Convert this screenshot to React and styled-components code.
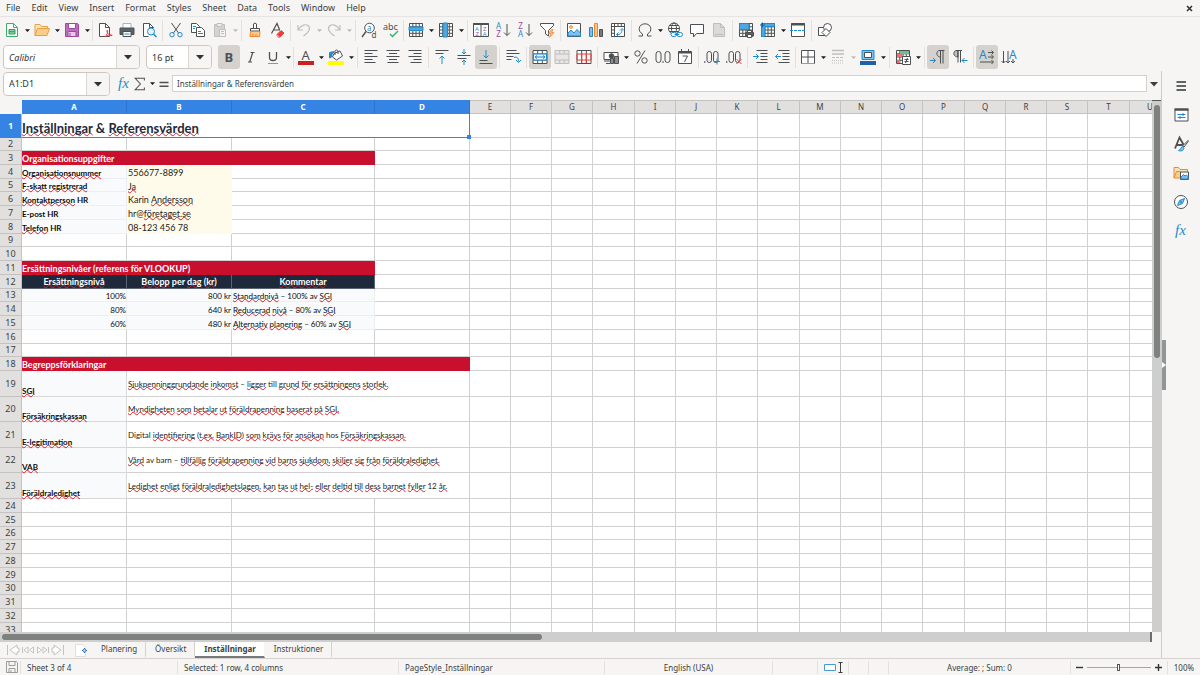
import { Fragment } from 'react';
import styled, { createGlobalStyle } from 'styled-components';

const GlobalStyle = createGlobalStyle`
  * {
    box-sizing: border-box;
  }

  body {
    margin: 0;
    background-color: #f6f5f4;
  }

  button, input {
    font-family: inherit;
    color: inherit;
    border-radius: 0;
    margin: 0;
    padding: 0;
  }
`;

const Window = styled.div`
  display: flex;
  flex-direction: column;
  height: 100vh;
  overflow: hidden;
  background-color: #f6f5f4;
  color: #3a3f41;
  font-family: 'Noto Sans', 'Open Sans', sans-serif;
  font-size: 9px;
`;

const MenuBar = styled.nav`
  display: flex;
  align-items: center;
  height: 17px;
  padding-right: 6px;
  border-bottom: 1px solid #e6e4e2;
`;

const MenuItem = styled.button`
  border: none;
  background: none;
  font-size: 9px;
  line-height: 16px;
  padding: 0 5px 0 6px;
`;

const CloseButton = styled.button`
  display: flex;
  margin-left: auto;
  border: none;
  background: none;
`;

const Toolbar = styled.div`
  display: flex;
  align-items: center;
  height: 27px;
  padding: 0 0 1px ${props => props.$inset ? '3px' : '1px'};
`;

const ToolButton = styled.button`
  display: flex;
  align-items: center;
  justify-content: center;
  flex-shrink: 0;
  width: 22px;
  height: 24px;
  border: none;
  border-radius: 3px;
  background-color: ${props => props.$active ? '#d5d1cd' : 'transparent'};
`;

const ArrowButton = styled.button`
  display: flex;
  align-items: center;
  justify-content: center;
  flex-shrink: 0;
  width: 8px;
  height: 24px;
  border: none;
  background: none;
  color: ${props => props.disabled ? '#bdbbb9' : '#1b1b1b'};
`;

const Separator = styled.span`
  flex-shrink: 0;
  width: 1px;
  height: 21px;
  margin: ${props => props.$tight ? '0 1px' : '0 2px'};
  background-color: #e3e1df;
`;

const Combo = styled.div`
  display: flex;
  flex-shrink: 0;
  width: ${props => props.$width};
  height: 24px;
  margin-right: 6px;
  border: 1px solid #cdc7c2;
  border-radius: 4px;
  background-color: #fff;
  overflow: hidden;
`;

const ComboInput = styled.input`
  flex: 1;
  min-width: 0;
  border: none;
  outline: none;
  background: none;
  padding-left: 5px;
  font-size: 9px;
  font-style: ${props => props.$italic ? 'italic' : 'normal'};
  color: #2e3436;
`;

const ComboArrow = styled.button`
  display: flex;
  align-items: center;
  justify-content: center;
  width: 23px;
  border: none;
  border-left: 1px solid #dad6d2;
  background-color: #f6f5f4;
  color: #2e3436;
`;

const Workspace = styled.div`
  display: flex;
  flex: 1;
  min-height: 0;
`;

const Document = styled.main`
  display: flex;
  flex-direction: column;
  flex: 1;
  min-width: 0;
  border-right: 1px solid #cfcdca;
`;

const FormulaBar = styled.div`
  display: flex;
  align-items: center;
  height: 29px;
  padding: 0 0 4px 3px;
`;

const FormulaButton = styled.button`
  display: flex;
  align-items: center;
  justify-content: center;
  width: 16px;
  height: 24px;
  border: none;
  background: none;
`;

const FormulaInput = styled.input`
  flex: 1;
  min-width: 0;
  height: 17px;
  border: 1px solid #d5d0cc;
  outline: none;
  background-color: #fff;
  padding-left: 4px;
  font-size: 8px;
`;

const ExpandButton = styled(FormulaButton)`
  width: 14px;
`;

const GridRow = styled.div`
  display: flex;
  flex: 1;
  min-height: 0;
`;

const GridPane = styled.div`
  flex: 1;
  min-width: 0;
  overflow: hidden;
  background-color: #fff;
`;

const Sheet = styled.table`
  table-layout: fixed;
  width: 1px;
  border-collapse: separate;
  border-spacing: 0;
`;

const HeaderCell = styled.th`
  height: 14px;
  padding: 0;
  border-top: 1px solid ${props => props.$selected ? '#3584e4' : '#c4c3c2'};
  border-right: 1px solid ${props => props.$selected ? '#2c74cc' : '#c4c3c2'};
  border-bottom: 1px solid ${props => props.$selected ? '#3584e4' : '#c4c3c2'};
  background-color: ${props => props.$selected ? '#3584e4' : '#e1e0df'};
  color: ${props => props.$selected ? '#fff' : '#3a3f41'};
  font-size: 8px;
  font-weight: ${props => props.$selected ? '700' : '400'};
  line-height: 12px;
`;

const CornerCell = styled.th`
  padding: 0;
  background-color: #f6f5f4;
`;

const RowHeader = styled.th`
  padding: 0;
  border-right: 1px solid #c4c3c2;
  border-bottom: 1px solid ${props => props.$selected ? '#3584e4' : '#c4c3c2'};
  background-color: ${props => props.$selected ? '#3584e4' : '#e1e0df'};
  color: ${props => props.$selected ? '#fff' : '#3a3f41'};
  font-size: 9px;
  font-weight: ${props => props.$selected ? '700' : '400'};
  line-height: 12px;
`;

const FILLS = {
  none: { background: '#fff', line: '#d0d0d0', color: '#1c1c1c' },
  heading: { background: '#c8102e', line: '#c8102e', color: '#fff' },
  columns: { background: '#1e293b', line: '#5b6472', color: '#fff' },
  label: { background: '#f8fafc', line: '#eceff1', color: '#0b0b0b' },
  term: { background: '#f8fafc', line: '#d6d8da', color: '#0b0b0b' },
  value: { background: '#fffbeb', line: '#fffbeb', color: '#222' },
  plain: { background: '#fff', line: '#d0d0d0', color: '#1c1c1c' },
  title: { background: '#fff', line: '#3584e4', color: '#1e293b' },
};

const TEXT_SIZES = { small: '8px', large: '9px', title: '13px' };

const Cell = styled.td`
  height: ${props => props.$height}px;
  padding: 0;
  position: ${props => props.$anchor ? 'relative' : 'static'};
  border-right: 1px solid ${props => FILLS[props.$fill].line};
  border-bottom: 1px solid ${props => FILLS[props.$fill].line};
  background-color: ${props => FILLS[props.$fill].background};
  color: ${props => FILLS[props.$fill].color};
  vertical-align: ${props => props.$valign || 'bottom'};
  text-align: ${props => props.$align || 'left'};
`;

const CellText = styled.div`
  height: ${props => props.$size === 'title' ? '18px' : '12px'};
  padding-left: ${props => props.$bold ? '0' : '1px'};
  font-family: Lato, 'Open Sans', sans-serif;
  font-size: ${props => TEXT_SIZES[props.$size || 'small']};
  font-weight: ${props => props.$bold ? '700' : '400'};
  line-height: ${props => props.$size === 'title' ? '19px' : props.$low ? '15px' : '13px'};
  white-space: nowrap;
`;

const Misspelt = styled.span`
  text-decoration: underline wavy #e01b24 1px;
  text-decoration-skip-ink: none;
  text-underline-offset: -1px;
`;

const FillHandle = styled.span`
  position: absolute;
  right: -2px;
  bottom: -2px;
  width: 4px;
  height: 4px;
  background-color: #3584e4;
  z-index: 1;
`;

const VerticalScrollbar = styled.div`
  display: flex;
  flex-direction: column;
  align-items: center;
  width: 9px;
  padding-top: 4px;
  border-top: 1px solid #55585a;
  background-color: #cecece;
`;

const HorizontalScrollbar = styled.div`
  display: flex;
  align-items: center;
  height: 10px;
  margin-right: 9px;
  padding-left: 2px;
  border-right: 2px solid #6d6f70;
  background-color: #cecece;
`;

const ScrollThumb = styled.div`
  border-radius: 3px;
  background-color: #7f8180;
  width: ${props => props.$vertical ? '6px' : '47%'};
  height: ${props => props.$vertical ? '48%' : '6px'};
`;

const TabBar = styled.div`
  display: flex;
  align-items: center;
  height: 16px;
  padding-left: 5px;
`;

const TabNav = styled.button`
  display: flex;
  align-items: center;
  justify-content: center;
  width: 15px;
  height: 14px;
  border: none;
  background: none;
`;

const AddSheet = styled.button`
  display: flex;
  width: 12px;
  height: 14px;
  margin: 0 5px 0 10px;
  border: none;
  background: none;
`;

const SheetTab = styled.button`
  height: 16px;
  padding: 0 8px 0 9px;
  border: none;
  border-right: 1px solid ${props => props.$active ? 'transparent' : '#d5d2cf'};
  border-bottom: 2px solid ${props => props.$active ? '#77797a' : 'transparent'};
  background-color: ${props => props.$active ? '#fff' : 'transparent'};
  background-clip: padding-box;
  font-size: 8px;
  font-weight: ${props => props.$active ? '700' : '400'};
  line-height: 14px;
`;

const SideBar = styled.aside`
  display: flex;
  width: 38px;
`;

const SideHandle = styled.button`
  display: flex;
  align-items: center;
  justify-content: center;
  align-self: center;
  width: 4px;
  height: 50px;
  border: none;
  background-color: #929595;
`;

const SideDeck = styled.div`
  display: flex;
  flex-direction: column;
  flex: 1;
`;

const SideButton = styled.button`
  display: flex;
  align-items: center;
  justify-content: center;
  height: 29px;
  padding-right: 4px;
  border: none;
  background: none;
`;

const StatusBar = styled.footer`
  display: grid;
  grid-template-columns: 21px 157px 221px 206px 168px 45px 31px 20px 20px 1fr 97px 32px;
  align-items: center;
  height: 17px;
  border-top: 1px solid #d5d2cf;
  font-size: 8px;
`;

const StatusItem = styled.div`
  display: flex;
  align-items: center;
  justify-content: ${props => props.$center ? 'center' : 'flex-start'};
  height: 13px;
  padding-left: ${props => props.$center ? '0' : '6px'};
  border-right: ${props => props.$last ? 'none' : '1px solid #e3e1df'};
  white-space: nowrap;
`;

const ZoomControl = styled.div`
  display: flex;
  align-items: center;
  justify-content: center;
  gap: 4px;
  height: 13px;
  border-right: 1px solid #e3e1df;
`;

const ZoomButton = styled.button`
  display: flex;
  border: none;
  background: none;
`;

const ZoomSlider = styled.input`
  appearance: none;
  width: 64px;
  height: 8px;
  background: linear-gradient(#a3a5a6, #a3a5a6) center / 100% 1px no-repeat;

  &::-webkit-slider-thumb {
    appearance: none;
    width: 3px;
    height: 7px;
    border: 1px solid #55585a;
    background-color: #fff;
  }
`;

const Drawing = styled.svg`
  flex-shrink: 0;
  overflow: visible;
`;

const DARK = '#4d5052';
const BLUE = '#1e8bcd';
const LIGHT = '#83beec';
const GREY = '#c0bebc';
const ORANGE = '#ed8733';
const RED = '#ed3d3b';
const PURPLE = '#a0479f';

const Svg = ({ size = 16, children }) => (
  <Drawing width={size} height={size} viewBox="0 0 16 16" fill="none" stroke={DARK} strokeWidth="1" aria-hidden="true">
    {children}
  </Drawing>
);

const Triangle = ({ size = 6 }) => (
  <svg width={size} height={size} viewBox="0 0 8 8" aria-hidden="true">
    <path d="M0 2h8L4 6.500z" fill="currentColor" />
  </svg>
);

const Letter = ({ x, y, size, color = DARK, family = 'Noto Sans', weight = 400, slant, children }) => (
  <text
    x={x}
    y={y}
    fill={color}
    stroke="none"
    fontSize={size}
    fontFamily={`'${family}', sans-serif`}
    fontWeight={weight}
    fontStyle={slant ? 'italic' : 'normal'}
  >
    {children}
  </text>
);

const gridPath = 'M1.500 1.500h13v13h-13zM1.500 4.800h13M1.500 8h13M1.500 11.300h13M4.800 1.500v13M8 1.500v13M11.300 1.500v13';

const icons = {
  new: (
    <Svg>
      <path d="M2.500 1.500h7l4 4v9h-11z" fill="#fff" stroke="#3fae6c" />
      <path d="M9.500 1.500v4h4" stroke="#3fae6c" />
      <path d="M5 7.500h6v4.500H5z" fill="#8fd0a9" stroke="#2e9e5b" />
      <path d="M5 9.700h6" stroke="#2e9e5b" />
    </Svg>
  ),
  open: (
    <Svg>
      <path d="M1 13.500V2.500h5l1.500 2h6v2" fill="#fbe3b8" stroke="#e5a04a" />
      <path d="M1 13.500l2.500-7h12l-2.500 7z" fill="#f9cf87" stroke="#e5a04a" />
    </Svg>
  ),
  save: (
    <Svg>
      <path d="M1.500 1.500h12l1 1v12h-13z" fill="#bb70bd" stroke={PURPLE} />
      <path d="M4.500 1.500h7v5h-7z" fill="#fff" stroke={PURPLE} />
      <path d="M4 9.500h8v5H4z" fill="#e8cbe9" stroke={PURPLE} />
      <path d="M6 11v3" stroke={PURPLE} />
    </Svg>
  ),
  pdf: (
    <Svg>
      <path d="M2.500 1.500h6l4 4v9h-10z" fill="#fff" />
      <path d="M8.500 1.500v4h4" />
      <path d="M8 15c2-2 3-5 2.600-6.500-.6-1-1.200.5 0 2.500s3 3 4.300 2.500-2-1.500-6 .8" stroke={RED} />
    </Svg>
  ),
  print: (
    <Svg>
      <path d="M4 6V1.500h8V6" fill="#fff" stroke={LIGHT} />
      <path d="M1 6h14v6.500H1z" fill="#5c6266" stroke={DARK} />
      <path d="M4 9.500h8v5H4z" fill="#fff" />
      <path d="M5.500 12h5" stroke={BLUE} />
    </Svg>
  ),
  preview: (
    <Svg>
      <path d="M12.500 6V5.500l-4-4h-6v13h5" fill="#fff" />
      <path d="M8.500 1.500v4h4" />
      <circle cx="10" cy="9.500" r="3.500" fill="#e3f2fc" stroke={BLUE} />
      <path d="M12.500 12l3 3" stroke={BLUE} strokeWidth="1.500" />
    </Svg>
  ),
  cut: (
    <Svg>
      <path d="M3.500 1l7 10M12.500 1l-7 10" />
      <circle cx="4" cy="12.700" r="2.200" stroke={BLUE} />
      <circle cx="12" cy="12.700" r="2.200" stroke={BLUE} />
    </Svg>
  ),
  copy: (
    <Svg>
      <path d="M1.500 1.500h5l3 3v6h-8z" fill="#fff" />
      <path d="M6.500 5.500h5l3 3v6h-8z" fill="#fff" />
      <path d="M3 4.500h3M3 6.500h2M8 9.500h3M8 11.500h5" stroke={BLUE} />
    </Svg>
  ),
  paste: (
    <Svg>
      <path d="M2.500 2.500h10v12h-10z" fill="#d5d3d1" stroke={GREY} />
      <path d="M5 1.500h5v3H5z" fill="#eee" stroke={GREY} />
      <path d="M7.500 7.500h6v7h-6z" fill="#f6f5f4" stroke={GREY} />
      <path d="M9 9.500h3M9 11.500h3" stroke={GREY} />
    </Svg>
  ),
  clone: (
    <Svg>
      <path d="M6.500 6.500V2c0-1 3-1 3 0v4.500" fill="#fff" />
      <path d="M3.500 6.500h9V9h-9z" fill="#fff" />
      <path d="M3.500 9.500h9.500l-.5 5H3z" fill="#fbc88b" stroke={ORANGE} />
      <path d="M6 12v2.500M9 12v2.500" stroke={ORANGE} />
    </Svg>
  ),
  clear: (
    <Svg>
      <path d="M2.500 11.500L8 1.500l2.500 6M4.500 8H11" strokeWidth="1.200" />
      <path d="M8 12.500l4-4 3 2.500-4 4-2 .2z" fill={RED} stroke={RED} />
      <path d="M7.500 13l2.500 2" stroke="#f7a6a5" strokeWidth="1.500" />
    </Svg>
  ),
  undo: (
    <Svg>
      <path d="M2 3v5h5M2.500 7.500C5 3 10 1.500 12.500 4S13 10 7.500 14" stroke={GREY} strokeWidth="1.200" />
    </Svg>
  ),
  redo: (
    <Svg>
      <path d="M14 3v5H9M13.500 7.500C11 3 6 1.500 3.500 4S3 10 8.500 14" stroke={GREY} strokeWidth="1.200" />
    </Svg>
  ),
  find: (
    <Svg>
      <circle cx="8.500" cy="6" r="4.800" fill="#fff" />
      <path d="M5 9.500L1 15" strokeWidth="1.400" />
      <Letter x="6" y="8.500" size="8" color={BLUE}>a</Letter>
      <Letter x="10.500" y="15.500" size="8">d</Letter>
    </Svg>
  ),
  spelling: (
    <Svg>
      <Letter x="0" y="7.500" size="9">abc</Letter>
      <path d="M7 12l2.500 2.500L15 9" stroke="#2eb56b" strokeWidth="1.400" />
    </Svg>
  ),
  row: (
    <Svg>
      <path d={gridPath} fill="#fff" />
      <path d="M1 5h14v3.500H1z" fill="#4ea8e0" stroke={BLUE} />
    </Svg>
  ),
  column: (
    <Svg>
      <path d={gridPath} fill="#fff" />
      <path d="M5 1h4.500v14H5z" fill="#4ea8e0" stroke={BLUE} />
    </Svg>
  ),
  sort: (
    <Svg>
      <path d="M.5 1.500h15v13H.5zM8 1.500v13" fill="#fff" />
      <path d="M.5 2h15" strokeWidth="2" />
      <Letter x="2" y="8.500" size="6" color={BLUE}>A</Letter>
      <Letter x="2.500" y="14" size="6" color={PURPLE}>Z</Letter>
      <Letter x="10" y="8.500" size="6" color={PURPLE}>Z</Letter>
      <Letter x="9.800" y="14" size="6" color={BLUE}>A</Letter>
    </Svg>
  ),
  ascending: (
    <Svg>
      <Letter x="1" y="7" size="8" color={BLUE}>A</Letter>
      <Letter x="1.200" y="15" size="8" color={PURPLE}>Z</Letter>
      <path d="M12 2v11.500M9 10.500l3 3 3-3" />
    </Svg>
  ),
  descending: (
    <Svg>
      <Letter x="1.200" y="7" size="8" color={PURPLE}>Z</Letter>
      <Letter x="1" y="15" size="8" color={BLUE}>A</Letter>
      <path d="M12 2v11.500M9 10.500l3 3 3-3" />
    </Svg>
  ),
  filter: (
    <Svg>
      <path d="M1.500 1.500h13v2l-5 5v5.500L6.500 12V8.500l-5-5z" fill="#fff" />
      <path d="M12.500 7.500l-3 4H12l-1.500 4 4.500-5h-2.500l1.500-3z" fill="#fbc88b" stroke={ORANGE} strokeWidth=".8" />
    </Svg>
  ),
  image: (
    <Svg>
      <path d="M1.500 1.500h13v13h-13z" fill="#fff" />
      <path d="M2 14v-3l3-3 3 3 3-3.500 3.500 3.500V14z" fill={LIGHT} stroke={BLUE} />
      <circle cx="5" cy="5" r="1.400" fill="#fbc88b" stroke={ORANGE} strokeWidth=".8" />
    </Svg>
  ),
  chart: (
    <Svg>
      <path d="M1.500 5.500h3v9h-3z" fill={LIGHT} stroke={BLUE} />
      <path d="M6.500 1.500h3v13h-3z" fill="#fbc88b" stroke={ORANGE} />
      <path d="M11.500 7.500h3v7h-3z" fill="#77797b" />
    </Svg>
  ),
  pivot: (
    <Svg>
      <path d="M1.500 1.500h13v13h-13zM1.500 4.500h13M4.500 1.500v13M8 1.500v3M11.300 1.500v3M1.500 8h3M1.500 11.300h3" fill="#fff" />
      <path d="M7 12.500c3 .5 5-1.500 5-5M10 8.500l2-2 2 2M8.500 10.500l-2 2 2 2" stroke={BLUE} />
    </Svg>
  ),
  omega: (
    <Svg>
      <path d="M1.500 14h4v-2C3 10.500 2 8.500 2.200 6.500 2.500 3.500 5 1.800 8 1.800s5.500 1.700 5.800 4.700c.2 2-.8 4-3.300 5.500v2h4" />
    </Svg>
  ),
  link: (
    <Svg>
      <circle cx="7" cy="6.500" r="5.500" fill="#fff" />
      <ellipse cx="7" cy="6.500" rx="2.500" ry="5.500" />
      <path d="M1.500 6.500h11M2.500 3.500h9M2.500 9.500h9" />
      <rect x="4" y="10.500" width="5.500" height="4" rx="2" fill="#fff" stroke={BLUE} />
      <rect x="10" y="10.500" width="5.500" height="4" rx="2" fill="#fff" stroke={BLUE} />
      <path d="M7.500 12.500h5" stroke={BLUE} />
    </Svg>
  ),
  comment: (
    <Svg>
      <path d="M1.500 2.500h13v9h-7l-3 3.500v-3.500h-3z" fill="#fff" />
    </Svg>
  ),
  headerFooter: (
    <Svg>
      <path d="M2.500 1.500h7l4 4v9h-11z" fill="#dcdad8" stroke={GREY} />
      <path d="M9.500 1.500v4h4M4 12.500h8" stroke={GREY} />
    </Svg>
  ),
  printArea: (
    <Svg>
      <path d={gridPath} fill="#fff" />
      <path d="M1.500 1.500h9.500v6h-9.500z" fill="#4ea8e0" stroke={BLUE} />
      <path d="M7.500 10.500h8V14h-8z" fill="#5c6266" />
      <path d="M9.500 8.500h4v2h-4zM9.500 12.500h4v3h-4z" fill="#fff" />
    </Svg>
  ),
  freeze: (
    <Svg>
      <path d={gridPath} fill="#fff" />
      <path d="M1.500 1.500h13v3h-9.500v10h-3.500z" fill="#4ea8e0" stroke={BLUE} />
      <path d="M0 3h5M2.500.5v5" stroke="#155f99" />
    </Svg>
  ),
  split: (
    <Svg>
      <path d="M1.500 1.500h13v13h-13z" fill="#fff" />
      <path d="M1 2.500h14" strokeWidth="2" />
      <path d="M0 8.500h16" stroke={BLUE} strokeDasharray="3 1" />
    </Svg>
  ),
  shapes: (
    <Svg>
      <path d="M1.500 5.500h8v8h-8z" fill="#fff" />
      <circle cx="10.500" cy="5.500" r="4" fill="#fff" />
      <path d="M9 6.500l4 4-4 4-4-4z" fill="#fff" />
    </Svg>
  ),
  bold: <Svg><Letter x="3.500" y="13" size="13" weight={700}>B</Letter></Svg>,
  italic: <Svg><path d="M7.500 3.500h4M5 13h4M9.700 3.500L6.700 13" strokeWidth="1.200" /></Svg>,
  underline: (
    <Svg>
      <path d="M4.500 3v5.500c0 4 7 4 7 0V3" strokeWidth="1.300" />
      <path d="M3 14.500h10" stroke="#4ea8e0" />
    </Svg>
  ),
  fontColor: (
    <Svg>
      <Letter x="3.500" y="10.500" size="13">A</Letter>
      <path d="M0 14h16" stroke="#c9211e" strokeWidth="4" />
    </Svg>
  ),
  highlight: (
    <Svg>
      <path d="M6 4.500l6-2.500 2.500 5-6 4-4-3z" fill="#fff" />
      <path d="M7 6V2.500c0-2 3-2 3 0V5" />
      <path d="M1.500 9V3.500L6 2.500 4 5.500 3.500 8z" fill={BLUE} stroke={BLUE} />
      <path d="M0 14h16" stroke="#ffff00" strokeWidth="4" />
    </Svg>
  ),
  alignLeft: <Svg><path d="M1.500 1.500h13M1.500 4.500h8M1.500 7.500h13M1.500 10.500h8M1.500 13.500h11" /></Svg>,
  alignCenter: <Svg><path d="M1.500 1.500h13M4 4.500h8M1.500 7.500h13M4 10.500h8M2.500 13.500h11" /></Svg>,
  alignRight: <Svg><path d="M1.500 1.500h13M6.500 4.500h8M1.500 7.500h13M6.500 10.500h8M3.500 13.500h11" /></Svg>,
  alignTop: (
    <Svg>
      <path d="M1.500 1.500h13M1.500 4.500h8" />
      <path d="M8 15V7M5.500 9.500L8 7l2.500 2.500" stroke={BLUE} />
    </Svg>
  ),
  alignMiddle: (
    <Svg>
      <path d="M1.500 6.500h13M1.500 9.500h9" />
      <path d="M8 0v5M6 3l2 2 2-2M8 16v-5M6 13l2-2 2 2" stroke={BLUE} />
    </Svg>
  ),
  alignBottom: (
    <Svg>
      <path d="M1.500 11.500h8M1.500 14.500h13" />
      <path d="M8 1v8M5.500 6.500L8 9l2.500-2.500" stroke={BLUE} />
    </Svg>
  ),
  wrap: (
    <Svg>
      <path d="M1.500 1.500h10M1.500 4.500h13M1.500 7.500h7M1.500 10.500h5" />
      <path d="M9 8.500c3-1 4.500 0 4.500 4M11 11l2.500 2.500L16 11" stroke={BLUE} />
    </Svg>
  ),
  merge: (
    <Svg>
      <path d="M1 1.500h14v13H1zM1 5h14M1 11h14M5.700 1.500V5M10.300 1.500V5M5.700 11v3.500M10.300 11v3.500" fill="#fff" />
      <path d="M1.500 5h13v6h-13z" fill="#e3f2fc" stroke={BLUE} />
      <path d="M3 8h10M5 6.500L3 8l2 1.500M11 6.500L13 8l-2 1.500" stroke={BLUE} />
    </Svg>
  ),
  mergeCells: (
    <Svg>
      <path d="M1 1.500h14v13H1zM1 5h14M1 11h14M5.700 1.500V5M10.300 1.500V5M5.700 11v3.500M10.300 11v3.500" fill="#e8e6e4" stroke={GREY} />
    </Svg>
  ),
  splitCells: (
    <Svg>
      <path d="M1 1.500h14v13H1zM5.700 1.500v13M10.300 1.500v13" fill="#fff" />
      <path d="M1 5h14v6H1zM5.700 5v9M10.300 5v9" stroke={RED} />
    </Svg>
  ),
  currency: (
    <Svg>
      <path d="M1 3.500h14v7H1z" fill="#fff" />
      <circle cx="8.500" cy="7" r="2.300" fill={DARK} />
      <path d="M7.500 9.500h3v5h-3zM11.500 7.500h4v7h-4z" fill="#8b8d8f" />
      <path d="M1 12h6M3 14.500h4" />
    </Svg>
  ),
  percent: (
    <Svg>
      <circle cx="4.500" cy="4.500" r="2.700" />
      <circle cx="11.500" cy="11.500" r="2.700" />
      <path d="M12 1.500l-8 13" />
    </Svg>
  ),
  number: (
    <Svg>
      <rect x="1" y="2.500" width="5" height="11" rx="2.500" />
      <rect x="10" y="2.500" width="5" height="11" rx="2.500" />
      <path d="M8 12v2" />
    </Svg>
  ),
  date: (
    <Svg>
      <path d="M1.500 2.500h13v12h-13z" fill="#fff" />
      <path d="M1.500 3.500h13" strokeWidth="2" />
      <path d="M4.500 0v2.500M11.500 0v2.500M5.500 7h5L7.500 13" />
    </Svg>
  ),
  addDecimal: (
    <Svg>
      <path d="M.8 12v2" />
      <rect x="3" y="2.500" width="4.500" height="11" rx="2.200" />
      <rect x="9.500" y="2.500" width="4.500" height="11" rx="2.200" />
      <path d="M10 12.500h6M13 9.500v6" stroke={BLUE} />
    </Svg>
  ),
  deleteDecimal: (
    <Svg>
      <path d="M.8 12v2" />
      <rect x="3" y="2.500" width="4.500" height="11" rx="2.200" />
      <rect x="9.500" y="2.500" width="4.500" height="11" rx="2.200" />
      <path d="M10.500 10l5 5M15.500 10l-5 5" stroke={RED} />
    </Svg>
  ),
  indent: (
    <Svg>
      <path d="M3.500 1.500h11M7.500 4.500h7M7.500 7.500h7M7.500 10.500h7M3.500 13.500h11" />
      <path d="M0 7.500h5.500M3 5l2.500 2.500L3 10" stroke={BLUE} />
    </Svg>
  ),
  outdent: (
    <Svg>
      <path d="M3.500 1.500h11M7.500 4.500h7M7.500 7.500h7M7.500 10.500h7M3.500 13.500h11" />
      <path d="M6 7.500H.5M3 5L.5 7.500 3 10" stroke={BLUE} />
    </Svg>
  ),
  borders: (
    <Svg>
      <path d="M1.500 1.500h13v13h-13zM8 1.500v13M1.500 8h13" fill="#fff" />
      <path d="M1.500 14.500h13" stroke={ORANGE} />
    </Svg>
  ),
  borderStyle: (
    <Svg>
      <path d="M2 1.500h12M2 5h12" stroke={GREY} strokeWidth="1.500" />
      <path d="M2 8.500h12" stroke={GREY} strokeDasharray="3 1" />
      <path d="M2 11.500h12M2 14h12" stroke={GREY} strokeDasharray="1 1" />
    </Svg>
  ),
  borderColor: (
    <Svg>
      <path d="M2 1.500h12v9H2z" fill={LIGHT} stroke={BLUE} />
      <path d="M4.500 3.500h7v5h-7z" fill="#fff" />
      <path d="M0 14h16" stroke="#1f62a8" strokeWidth="4" />
    </Svg>
  ),
  conditional: (
    <Svg>
      <path d={gridPath} fill="#fff" />
      <path d="M5 2h9v3H5z" fill="#6cc08b" stroke="none" />
      <path d="M2 5h5v3H2zM2 11h3v3H2z" fill="#ee7170" stroke="none" />
      <path d="M7.500 7.500h8v8h-8z" fill="#fff" />
      <path d="M9.500 10.500h4M9.500 12.500h4M12.500 9l-2 5" />
    </Svg>
  ),
  ltr: (
    <Svg>
      <path d="M14.500 1.500H10C7 1.500 6.500 4 7 5.500S9 8 10.500 8M10.500 1.500v13M13 1.500v13" />
      <path d="M0 11.500h5.500M3 9l2.500 2.500L3 14" stroke={BLUE} />
    </Svg>
  ),
  rtl: (
    <Svg>
      <path d="M6 1.500H5C2 1.500 1.500 4 2 5.500S4 8 6 8z" fill={GREY} />
      <path d="M10 1.500H5M6 1.500v12M8.500 1.500v12" />
      <path d="M15.500 11.500H10M12.500 9L10 11.500l2.500 2.500" stroke={BLUE} />
    </Svg>
  ),
  textHorizontal: (
    <Svg>
      <Letter x="0" y="9.500" size="12" color={BLUE}>A</Letter>
      <path d="M9 3.500h5M9 8h5M1 13h13M12.500 1.500l2 2-2 2M12.500 6l2 2-2 2M12.500 11l2 2-2 2" />
    </Svg>
  ),
  textVertical: (
    <Svg>
      <Letter x="8" y="9.500" size="12" color={BLUE}>A</Letter>
      <path d="M2.500 2v12M7 2v12M12 10v4M.5 12l2 2 2-2M5 12l2 2 2-2M10 12l2 2 2-2" />
    </Svg>
  ),
  fx: <Svg><Letter x="2" y="12" size="15" slant color={BLUE} family="Liberation Serif">fx</Letter></Svg>,
  sum: <Svg size={14}><path d="M13 4V1.500H2.500L8.500 8l-6 6.500H13V12" strokeWidth="1.200" /></Svg>,
  equals: <Svg size={12}><path d="M2 6h12M2 11h12" strokeWidth="2" /></Svg>,
  menu: <Svg><path d="M3.500 4h9.500M3.500 8h9.500M3.500 12h9.500" stroke="#2e3436" strokeWidth="1.600" /></Svg>,
  properties: (
    <Svg>
      <path d="M2 2.500h13v11.500H2z" fill="#fff" />
      <path d="M1.500 2.500h14" strokeWidth="2.500" />
      <path d="M4.500 7.500h8M4.500 10.500h8M10 6v3M7 9v3" stroke={BLUE} />
    </Svg>
  ),
  styles: (
    <Svg>
      <path d="M2 12.500L6.500 1.500l4.500 8M3.500 9h6" strokeWidth="1.800" />
      <path d="M15.500 5l-4.500 6-1.500-1 5.500-5.500z" fill="#fff" />
      <path d="M9.500 10.500c-2 .5-1 3-4 4 2.500 1 5 .5 5.500-3z" fill={LIGHT} stroke={BLUE} />
    </Svg>
  ),
  gallery: (
    <Svg>
      <path d="M1 13V2.500h4.500l1.500 2h7.500V7" fill="#fbe3b8" stroke={ORANGE} />
      <path d="M1 13l2.500-6.500h4V13z" fill="#f9cf87" stroke={ORANGE} />
      <path d="M7.500 7h8v7.500h-8z" fill="#fff" />
      <path d="M8 14v-2l2.500-2.500 1.500 1.500 1.500-1 1.500 1.500V14z" fill={LIGHT} stroke={BLUE} />
    </Svg>
  ),
  navigator: (
    <Svg>
      <circle cx="8" cy="8" r="6.500" fill="#fff" />
      <path d="M11.500 4.500L9.500 9.500l-5 2 2-5z" fill={LIGHT} stroke={BLUE} />
      <circle cx="8" cy="8" r="1" fill={BLUE} stroke="none" />
    </Svg>
  ),
};

const sep = { kind: 'sep' };
const tight = { kind: 'sep', tight: true };
const tool = (icon, label, options = {}) => ({ kind: 'tool', icon, label, ...options });

const standardTools = [
  tool('new', 'New', { arrow: true }),
  tool('open', 'Open', { arrow: true }),
  tool('save', 'Save', { arrow: true }),
  tight,
  tool('pdf', 'Export as PDF'),
  tool('print', 'Print'),
  tool('preview', 'Print Preview'),
  sep,
  tool('cut', 'Cut'),
  tool('copy', 'Copy'),
  tool('paste', 'Paste', { arrow: true, disabled: true }),
  sep,
  tool('clone', 'Clone Formatting'),
  tool('clear', 'Clear Formatting'),
  sep,
  tool('undo', 'Undo', { arrow: true, disabled: true }),
  tool('redo', 'Redo', { arrow: true, disabled: true }),
  sep,
  tool('find', 'Find and Replace'),
  tool('spelling', 'Spelling'),
  tight,
  tool('row', 'Row', { arrow: true }),
  tool('column', 'Column', { arrow: true }),
  sep,
  tool('sort', 'Sort'),
  tool('ascending', 'Sort Ascending'),
  tool('descending', 'Sort Descending'),
  tool('filter', 'AutoFilter'),
  sep,
  tool('image', 'Insert Image'),
  tool('chart', 'Insert Chart'),
  tool('pivot', 'Pivot Table'),
  sep,
  tool('omega', 'Special Character', { arrow: true }),
  tool('link', 'Insert Hyperlink'),
  tool('comment', 'Insert Comment'),
  tool('headerFooter', 'Headers and Footers', { disabled: true }),
  sep,
  tool('printArea', 'Define Print Area'),
  tool('freeze', 'Freeze Rows and Columns', { arrow: true }),
  tool('split', 'Split Window'),
  sep,
  tool('shapes', 'Show Draw Functions'),
];

const formattingTools = [
  tool('bold', 'Bold', { active: true }),
  tool('italic', 'Italic'),
  tool('underline', 'Underline', { arrow: true }),
  tight,
  tool('fontColor', 'Font Color', { arrow: true }),
  tool('highlight', 'Background Color', { arrow: true }),
  sep,
  tool('alignLeft', 'Align Left'),
  tool('alignCenter', 'Center Horizontally'),
  tool('alignRight', 'Align Right'),
  sep,
  tool('alignTop', 'Align Top'),
  tool('alignMiddle', 'Center Vertically'),
  tool('alignBottom', 'Align Bottom', { active: true }),
  sep,
  tool('wrap', 'Wrap Text'),
  sep,
  tool('merge', 'Merge and Center Cells', { active: true }),
  tool('mergeCells', 'Merge Cells', { disabled: true }),
  tool('splitCells', 'Unmerge Cells'),
  sep,
  tool('currency', 'Format as Currency', { arrow: true }),
  tool('percent', 'Format as Percent'),
  tool('number', 'Format as Number'),
  tool('date', 'Format as Date'),
  sep,
  tool('addDecimal', 'Add Decimal Place'),
  tool('deleteDecimal', 'Delete Decimal Place'),
  sep,
  tool('indent', 'Increase Indent'),
  tool('outdent', 'Decrease Indent'),
  tight,
  tool('borders', 'Borders', { arrow: true }),
  tool('borderStyle', 'Border Style', { arrow: true, disabled: true }),
  tool('borderColor', 'Border Color', { arrow: true }),
  sep,
  tool('conditional', 'Conditional Formatting', { arrow: true }),
  sep,
  tool('ltr', 'Left-To-Right', { active: true }),
  tool('rtl', 'Right-To-Left'),
  sep,
  tool('textHorizontal', 'Text Direction Left to Right', { active: true }),
  tool('textVertical', 'Text Direction Top to Bottom'),
];

const menus = ['File', 'Edit', 'View', 'Insert', 'Format', 'Styles', 'Sheet', 'Data', 'Tools', 'Window', 'Help'];
const sideTools = [
  ['menu', 'Sidebar Settings'],
  ['properties', 'Properties'],
  ['styles', 'Styles'],
  ['gallery', 'Gallery'],
  ['navigator', 'Navigator'],
  ['fx', 'Functions'],
];
const tabs = ['Planering', 'Översikt', 'Inställningar', 'Instruktioner'];

const columns = 'ABCDEFGHIJKLMNOPQRSTUVWXYZ'.split('').map((name, i) => {
  const wide = [105, 105, 143, 95];
  return { name, width: i < 4 ? wide[i] : i % 4 === 3 ? 42 : 41 };
});

const rowHeight = (n) => {
  if (n === 1) return 24;
  if (n >= 19 && n <= 23) return n % 2 ? 26 : 25;
  return [2, 5, 9, 13, 17, 26, 30].includes(n) ? 13 : 14;
};

// Words wrapped in tildes are flagged by the spell checker.
const label = (text) => ({ text, fill: 'label', bold: true, low: true });
const value = (text) => ({ text, fill: 'value', size: 'large', valign: 'top', low: true });
const heading = (text, span) => ({ text, span, fill: 'heading', bold: true, size: 'large' });
const columnTitle = (text) => ({ text, fill: 'columns', bold: true, size: 'large', align: 'center', valign: 'top' });
const amount = (text) => ({ text, fill: 'label', align: 'right', low: true });
const note = (text) => ({ text, fill: 'label', low: true });
const term = (text) => ({ text, fill: 'term', bold: true, low: true });
const meaning = (text) => ({ text, span: 3, fill: 'plain', valign: 'middle' });

const content = {
  1: [{ text: '~Inställningar~ & ~Referensvärden~', span: 4, fill: 'title', bold: true, size: 'title', handle: true }],
  3: [heading('~Organisationsuppgifter~', 3)],
  4: [label('~Organisationsnummer~'), value('556677-8899')],
  5: [label('~F-skatt~ ~registrerad~'), value('~Ja~')],
  6: [label('~Kontaktperson~ HR'), value('Karin ~Andersson~')],
  7: [label('E-post HR'), value('hr@~företaget.se~')],
  8: [label('~Telefon~ HR'), value('08-123 456 78')],
  11: [heading('~Ersättningsnivåer~ (~referens~ ~för~ VLOOKUP)', 3)],
  12: [columnTitle('~Ersättningsnivå~'), columnTitle('~Belopp~ per ~dag~ (~kr~)'), columnTitle('~Kommentar~')],
  13: [amount('100%'), amount('800 kr'), note('~Standardnivå~ – 100% av ~SGI~')],
  14: [amount('80%'), amount('640 kr'), note('~Reducerad~ ~nivå~ – 80% av ~SGI~')],
  15: [amount('60%'), amount('480 kr'), note('~Alternativ~ ~planering~ – 60% av ~SGI~')],
  18: [heading('~Begreppsförklaringar~', 4)],
  19: [term('~SGI~'), meaning('~Sjukpenninggrundande~ ~inkomst~ – ~ligger~ till ~grund~ ~för~ ~ersättningens~ ~storlek.~')],
  20: [term('~Försäkringskassan~'), meaning('~Myndigheten~ ~som~ ~betalar~ ~ut~ ~föräldrapenning~ ~baserat~ ~på~ ~SGI.~')],
  21: [term('~E-legitimation~'), meaning('Digital ~identifiering~ (~t.ex.~ ~BankID~) ~som~ ~krävs~ ~för~ ~ansökan~ hos ~Försäkringskassan.~')],
  22: [term('~VAB~'), meaning('~Vård~ av barn – ~tillfällig~ ~föräldrapenning~ ~vid~ ~barns~ ~sjukdom,~ ~skiljer~ ~sig~ ~från~ ~föräldraledighet.~')],
  23: [term('~Föräldraledighet~'), meaning('~Ledighet~ ~enligt~ ~föräldraledighetslagen,~ ~kan~ ~tas~ ~ut~ ~hel-~ ~eller~ ~deltid~ ~till~ ~dess~ ~barnet~ ~fyller~ 12 ~år.~')],
};

const Spelled = ({ text }) => text.split('~').map((part, i) => (
  i % 2 ? <Misspelt key={i}>{part}</Misspelt> : <Fragment key={i}>{part}</Fragment>
));

const Tools = ({ items }) => items.map((item, i) => {
  if (item.kind === 'sep') return <Separator key={i} $tight={item.tight} />;
  return (
    <Fragment key={item.icon}>
      <ToolButton type="button" aria-label={item.label} $active={item.active} disabled={item.disabled}>
        {icons[item.icon]}
      </ToolButton>
      {item.arrow && (
        <ArrowButton type="button" aria-label={`${item.label} options`} disabled={item.disabled}>
          <Triangle size={5} />
        </ArrowButton>
      )}
    </Fragment>
  );
});

const SheetRow = ({ number }) => {
  const cells = content[number] || [];
  const used = cells.reduce((sum, cell) => sum + (cell.span || 1), 0);
  const height = rowHeight(number);
  return (
    <tr>
      <RowHeader scope="row" $selected={number === 1}>{number}</RowHeader>
      {cells.map((cell) => (
        <Cell
          key={cell.text}
          colSpan={cell.span || 1}
          $height={height}
          $fill={cell.fill}
          $align={cell.align}
          $valign={cell.valign}
          $anchor={cell.handle}
        >
          <CellText $size={cell.size} $bold={cell.bold} $low={cell.low}>
            <Spelled text={cell.text} />
          </CellText>
          {cell.handle && <FillHandle />}
        </Cell>
      ))}
      {columns.slice(used).map((column) => (
        <Cell key={column.name} $height={height} $fill="none" />
      ))}
    </tr>
  );
};

export default function App() {
  return (
    <Window>
      <GlobalStyle />
      <MenuBar>
        {menus.map((name) => <MenuItem key={name} type="button">{name}</MenuItem>)}
        <CloseButton type="button" aria-label="Close document">
          <svg width="9" height="9" viewBox="0 0 9 9" aria-hidden="true">
            <path d="M2 2l5 5M7 2l-5 5" stroke="#2e3436" strokeWidth="1.600" />
          </svg>
        </CloseButton>
      </MenuBar>
      <Toolbar>
        <Tools items={standardTools} />
      </Toolbar>
      <Toolbar $inset>
        <Combo $width="137px">
          <ComboInput aria-label="Font name" defaultValue="Calibri" $italic />
          <ComboArrow type="button" aria-label="Choose font"><Triangle size={8} /></ComboArrow>
        </Combo>
        <Combo $width="66px">
          <ComboInput aria-label="Font size" defaultValue="16 pt" />
          <ComboArrow type="button" aria-label="Choose size"><Triangle size={8} /></ComboArrow>
        </Combo>
        <Tools items={formattingTools} />
      </Toolbar>
      <Workspace>
        <Document>
          <FormulaBar>
            <Combo $width="107px">
              <ComboInput aria-label="Name box" defaultValue="A1:D1" />
              <ComboArrow type="button" aria-label="Named ranges"><Triangle size={8} /></ComboArrow>
            </Combo>
            <FormulaButton type="button" aria-label="Function Wizard">{icons.fx}</FormulaButton>
            <FormulaButton type="button" aria-label="Select Function">{icons.sum}</FormulaButton>
            <ArrowButton type="button" aria-label="Function list"><Triangle size={5} /></ArrowButton>
            <FormulaButton type="button" aria-label="Formula">{icons.equals}</FormulaButton>
            <FormulaInput aria-label="Input line" defaultValue="Inställningar & Referensvärden" />
            <ExpandButton type="button" aria-label="Expand Formula Bar"><Triangle size={8} /></ExpandButton>
          </FormulaBar>
          <GridRow>
            <GridPane>
              <Sheet>
                <colgroup>
                  <col width="22" />
                  {columns.map((column) => <col key={column.name} width={column.width} />)}
                </colgroup>
                <thead>
                  <tr>
                    <CornerCell aria-label="Select all" />
                    {columns.map((column, i) => (
                      <HeaderCell key={column.name} scope="col" $selected={i < 4}>{column.name}</HeaderCell>
                    ))}
                  </tr>
                </thead>
                <tbody>
                  {Array.from({ length: 60 }, (_, i) => <SheetRow key={i} number={i + 1} />)}
                </tbody>
              </Sheet>
            </GridPane>
            <VerticalScrollbar>
              <ScrollThumb $vertical />
            </VerticalScrollbar>
          </GridRow>
          <HorizontalScrollbar>
            <ScrollThumb />
          </HorizontalScrollbar>
          <TabBar>
            <TabNav type="button" aria-label="First sheet">
              <svg width="14" height="12" viewBox="0 0 14 12" fill="#fff" stroke="#c4c2c0" aria-hidden="true">
                <path d="M1.500 1v10M11 1L4 6l7 5V8h2V4h-2z" />
              </svg>
            </TabNav>
            <TabNav type="button" aria-label="Previous sheet">
              <svg width="14" height="12" viewBox="0 0 14 12" fill="#fff" stroke="#c4c2c0" aria-hidden="true">
                <path d="M1.500 3v6M7 3L3 6l4 3zM12.500 3l-4 3 4 3z" />
              </svg>
            </TabNav>
            <TabNav type="button" aria-label="Next sheet">
              <svg width="14" height="12" viewBox="0 0 14 12" fill="#fff" stroke="#c4c2c0" aria-hidden="true">
                <path d="M12.500 3v6M7 3l4 3-4 3zM1.500 3l4 3-4 3z" />
              </svg>
            </TabNav>
            <TabNav type="button" aria-label="Last sheet">
              <svg width="14" height="12" viewBox="0 0 14 12" fill="#fff" stroke="#c4c2c0" aria-hidden="true">
                <path d="M12.500 1v10M3 1l7 5-7 5V8H1V4h2z" />
              </svg>
            </TabNav>
            <AddSheet type="button" aria-label="Add sheet">
              <svg width="12" height="14" viewBox="0 0 12 14" aria-hidden="true">
                <path d="M.5 1.500h7l3 3v9H.5z" fill="#fff" stroke="#e0dedc" />
                <circle cx="9.500" cy="7.500" r="1.500" fill="#d9e9fb" stroke="#2f6fb8" />
                <path d="M9.500 5v1M9.500 9v1M7 7.500h1M11 7.500h1" stroke="#2f6fb8" />
              </svg>
            </AddSheet>
            {tabs.map((name) => (
              <SheetTab key={name} type="button" $active={name === 'Inställningar'}>{name}</SheetTab>
            ))}
          </TabBar>
        </Document>
        <SideBar>
          <SideHandle type="button" aria-label="Hide sidebar">
            <svg width="4" height="6" viewBox="0 0 4 6" aria-hidden="true"><path d="M0 0l4 3-4 3z" fill="#fff" /></svg>
          </SideHandle>
          <SideDeck>
            {sideTools.map(([icon, name]) => (
              <SideButton key={icon} type="button" aria-label={name}>{icons[icon]}</SideButton>
            ))}
          </SideDeck>
        </SideBar>
      </Workspace>
      <StatusBar>
        <StatusItem>
          <svg width="12" height="12" viewBox="0 0 12 12" fill="none" stroke="#9a9c9d" aria-hidden="true">
            <path d="M.5.500h10l1 1v10H.5zM3 .5v4h6v-4M3 11.500v-4h6v4M5 9v2" />
          </svg>
        </StatusItem>
        <StatusItem>Sheet 3 of 4</StatusItem>
        <StatusItem>Selected: 1 row, 4 columns</StatusItem>
        <StatusItem>PageStyle_Inställningar</StatusItem>
        <StatusItem $center>English (USA)</StatusItem>
        <StatusItem />
        <StatusItem>
          <svg width="20" height="12" viewBox="0 0 20 12" fill="none" aria-hidden="true">
            <path d="M.5 3.500h11v6H.5z" fill="#fff" stroke="#4a9ad0" />
            <path d="M14.500 1.500h4M14.500 11.500h4M16.500 1.500v10" stroke="#3a3f41" />
          </svg>
        </StatusItem>
        <StatusItem />
        <StatusItem />
        <StatusItem $center>Average: ; Sum: 0</StatusItem>
        <ZoomControl>
          <ZoomButton type="button" aria-label="Zoom out">
            <svg width="7" height="7" viewBox="0 0 7 7" aria-hidden="true"><path d="M0 3.500h7" stroke="#2e3436" strokeWidth="1.400" /></svg>
          </ZoomButton>
          <ZoomSlider type="range" min="0" max="200" defaultValue="98" aria-label="Zoom" />
          <ZoomButton type="button" aria-label="Zoom in">
            <svg width="7" height="7" viewBox="0 0 7 7" aria-hidden="true"><path d="M0 3.500h7M3.500 0v7" stroke="#2e3436" strokeWidth="1.400" /></svg>
          </ZoomButton>
        </ZoomControl>
        <StatusItem $last $center>100%</StatusItem>
      </StatusBar>
    </Window>
  );
}
